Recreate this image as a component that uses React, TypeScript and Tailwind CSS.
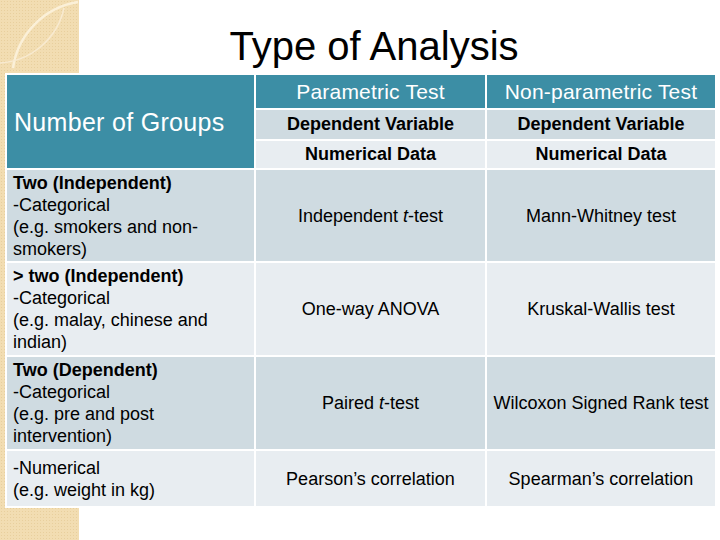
import React from "react";

const dark = "bg-[#cfdbe1]";
const light = "bg-[#e8edf1]";

function LeftCell({ bold, lines, tone }: { bold?: string; lines: React.ReactNode; tone: string }) {
  return (
    <div className={`${tone} flex flex-col justify-center pl-[6px] pr-[6px] text-[18px] leading-[22px] text-black`}>
      <div>
        {bold && <span className="font-bold">{bold}</span>}
        {bold && <br />}
        {lines}
      </div>
    </div>
  );
}

function Cell({ children, tone }: { children: React.ReactNode; tone: string }) {
  return (
    <div className={`${tone} flex items-center justify-center text-center text-[18px] leading-[22px] text-black`}>
      <span>{children}</span>
    </div>
  );
}

export default function App() {
  return (
    <div className="relative w-[720px] h-[540px] overflow-hidden bg-white font-['Liberation_Sans',Arial,sans-serif]">
      {/* decorative tan strip */}
      <div className="absolute left-0 top-0 h-[540px] w-[79px] bg-[#f2ddb2] bg-[radial-gradient(circle,#e8cf9d_0.8px,transparent_1px)] bg-[length:3px_3px]">
        <svg width="79" height="80" viewBox="0 0 79 80" className="block">
          <path d="M78 2 A78 78 0 0 0 13 68" fill="none" stroke="#fbf0d8" strokeWidth="2.5" />
          <path d="M0 63 A70 70 0 0 0 64 8" fill="none" stroke="#f8ead0" strokeWidth="1.5" />
        </svg>
      </div>

      <div className="relative flex flex-col">
        <div className="mt-[26px] flex justify-center pl-[28px]">
          <h1 className="text-[40px] leading-[40px] text-black font-normal">Type of Analysis</h1>
        </div>

        <div className="ml-[5px] mt-[7px] grid w-[712px] grid-cols-[247px_229px_228px] grid-rows-[33px_29px_27px_91px_92px_92px_55px] gap-[2px] bg-white p-[2px]">
          <div className="row-span-3 flex items-center bg-[#3c8ea5] pl-[7px] text-[25px] tracking-[0.3px] text-white">
            <span className="mt-[3px]">Number of Groups</span>
          </div>
          <div className="flex items-center justify-center bg-[#3c8ea5] text-[21px] tracking-[0.2px] text-white">Parametric Test</div>
          <div className="flex items-center justify-center bg-[#3c8ea5] text-[21px] tracking-[0.2px] text-white">Non-parametric Test</div>

          <div className={`${dark} flex items-center justify-center text-[18px] font-bold text-black`}>Dependent Variable</div>
          <div className={`${dark} flex items-center justify-center text-[18px] font-bold text-black`}>Dependent Variable</div>

          <div className={`${light} flex items-center justify-center text-[18px] font-bold text-black`}>Numerical Data</div>
          <div className={`${light} flex items-center justify-center text-[18px] font-bold text-black`}>Numerical Data</div>

          <LeftCell
            tone={dark}
            bold="Two (Independent)"
            lines={<>-Categorical<br />(e.g. smokers and non-smokers)</>}
          />
          <Cell tone={dark}>Independent <i>t</i>-test</Cell>
          <Cell tone={dark}>Mann-Whitney test</Cell>

          <LeftCell
            tone={light}
            bold="> two (Independent)"
            lines={<>-Categorical<br />(e.g. malay, chinese and indian)</>}
          />
          <Cell tone={light}>One-way ANOVA</Cell>
          <Cell tone={light}>Kruskal-Wallis test</Cell>

          <LeftCell
            tone={dark}
            bold="Two (Dependent)"
            lines={<>-Categorical<br />(e.g. pre and post intervention)</>}
          />
          <Cell tone={dark}>Paired <i>t</i>-test</Cell>
          <Cell tone={dark}>Wilcoxon Signed Rank test</Cell>

          <LeftCell tone={light} lines={<>-Numerical<br />(e.g. weight in kg)</>} />
          <Cell tone={light}>Pearson’s correlation</Cell>
          <Cell tone={light}>Spearman’s correlation</Cell>
        </div>
      </div>
    </div>
  );
}
